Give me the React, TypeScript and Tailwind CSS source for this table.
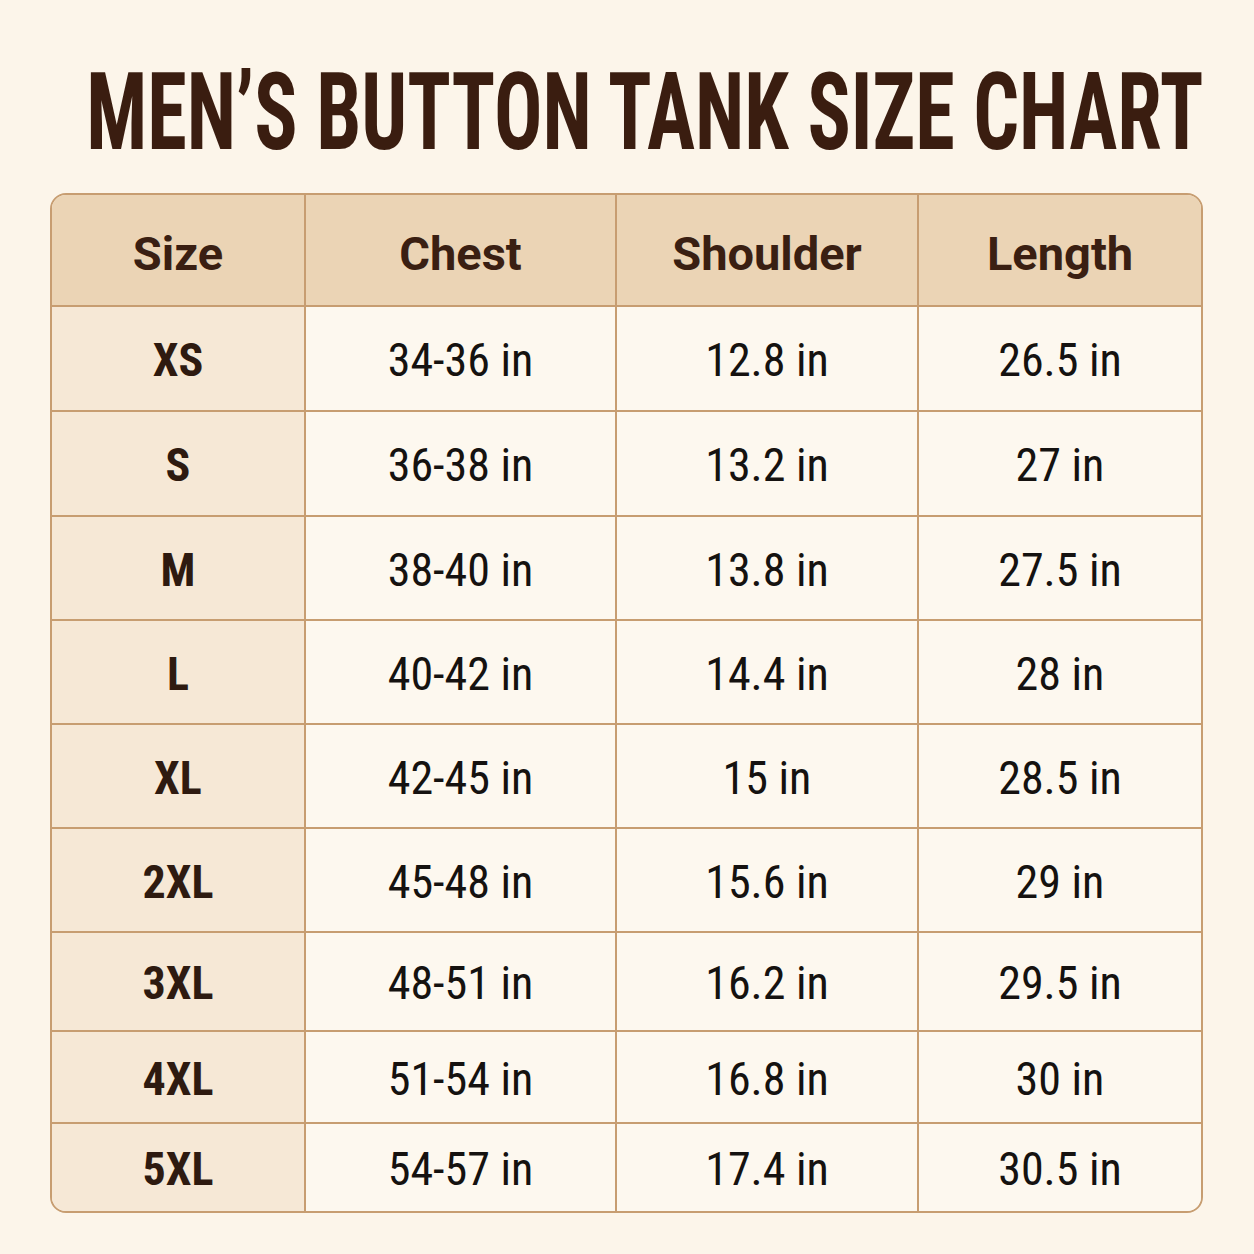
const rows = [
  { size: "XS", chest: "34-36 in", shoulder: "12.8 in", length: "26.5 in", h: "h-[105px]" },
  { size: "S", chest: "36-38 in", shoulder: "13.2 in", length: "27 in", h: "h-[105px]" },
  { size: "M", chest: "38-40 in", shoulder: "13.8 in", length: "27.5 in", h: "h-[104px]" },
  { size: "L", chest: "40-42 in", shoulder: "14.4 in", length: "28 in", h: "h-[104px]" },
  { size: "XL", chest: "42-45 in", shoulder: "15 in", length: "28.5 in", h: "h-[104px]" },
  { size: "2XL", chest: "45-48 in", shoulder: "15.6 in", length: "29 in", h: "h-[104px]" },
  { size: "3XL", chest: "48-51 in", shoulder: "16.2 in", length: "29.5 in", h: "h-[99px]" },
  { size: "4XL", chest: "51-54 in", shoulder: "16.8 in", length: "30 in", h: "h-[92px]" },
  { size: "5XL", chest: "54-57 in", shoulder: "17.4 in", length: "30.5 in", h: "h-[87px]" },
];

const headers = ["Size", "Chest", "Shoulder", "Length"];

export default function App() {
  return (
    <div className="w-[1254px] h-[1254px] bg-[#fcf5ea] font-['Roboto',sans-serif] flex flex-col">
      <div className="pt-[58px] pr-[51px] flex justify-end">
        <h1 className="text-[108px] leading-none font-bold font-stretch-[75%] text-[#3a1d10] whitespace-nowrap scale-x-[0.745] origin-right">
          MEN’S BUTTON TANK SIZE CHART
        </h1>
      </div>

      <div className="mt-[27px] ml-[50px] w-[1153px] border-2 border-[#c79d71] rounded-[16px] overflow-hidden grid grid-cols-[254px_311px_302px_282px]">
        {headers.map((label, i) => (
          <div
            key={label}
            className={`h-[112px] bg-[#ebd4b5] border-b-2 border-[#c79d71] flex items-center justify-center pt-2 text-[47px] font-bold text-[#3a1f12] ${
              i < 3 ? "border-r-2" : ""
            }`}
          >
            {label}
          </div>
        ))}

        {rows.map((row, r) => {
          const last = r === rows.length - 1;
          return [
            <div
              key={row.size + "-s"}
              className={`${row.h} bg-[#f6e8d6] border-r-2 border-[#c79d71] flex items-center justify-center pt-1 text-[46px] font-bold font-stretch-[82%] text-[#2e1a10] ${
                last ? "" : "border-b-2"
              }`}
            >
              {row.size}
            </div>,
            ...[row.chest, row.shoulder, row.length].map((val, c) => (
              <div
                key={row.size + c}
                className={`${row.h} bg-[#fdf8ef] border-[#c79d71] flex items-center justify-center pt-1 text-[46px] font-stretch-[80%] text-[#151210] ${
                  last ? "" : "border-b-2"
                } ${c < 2 ? "border-r-2" : ""}`}
              >
                {val}
              </div>
            )),
          ];
        })}
      </div>
    </div>
  );
}
